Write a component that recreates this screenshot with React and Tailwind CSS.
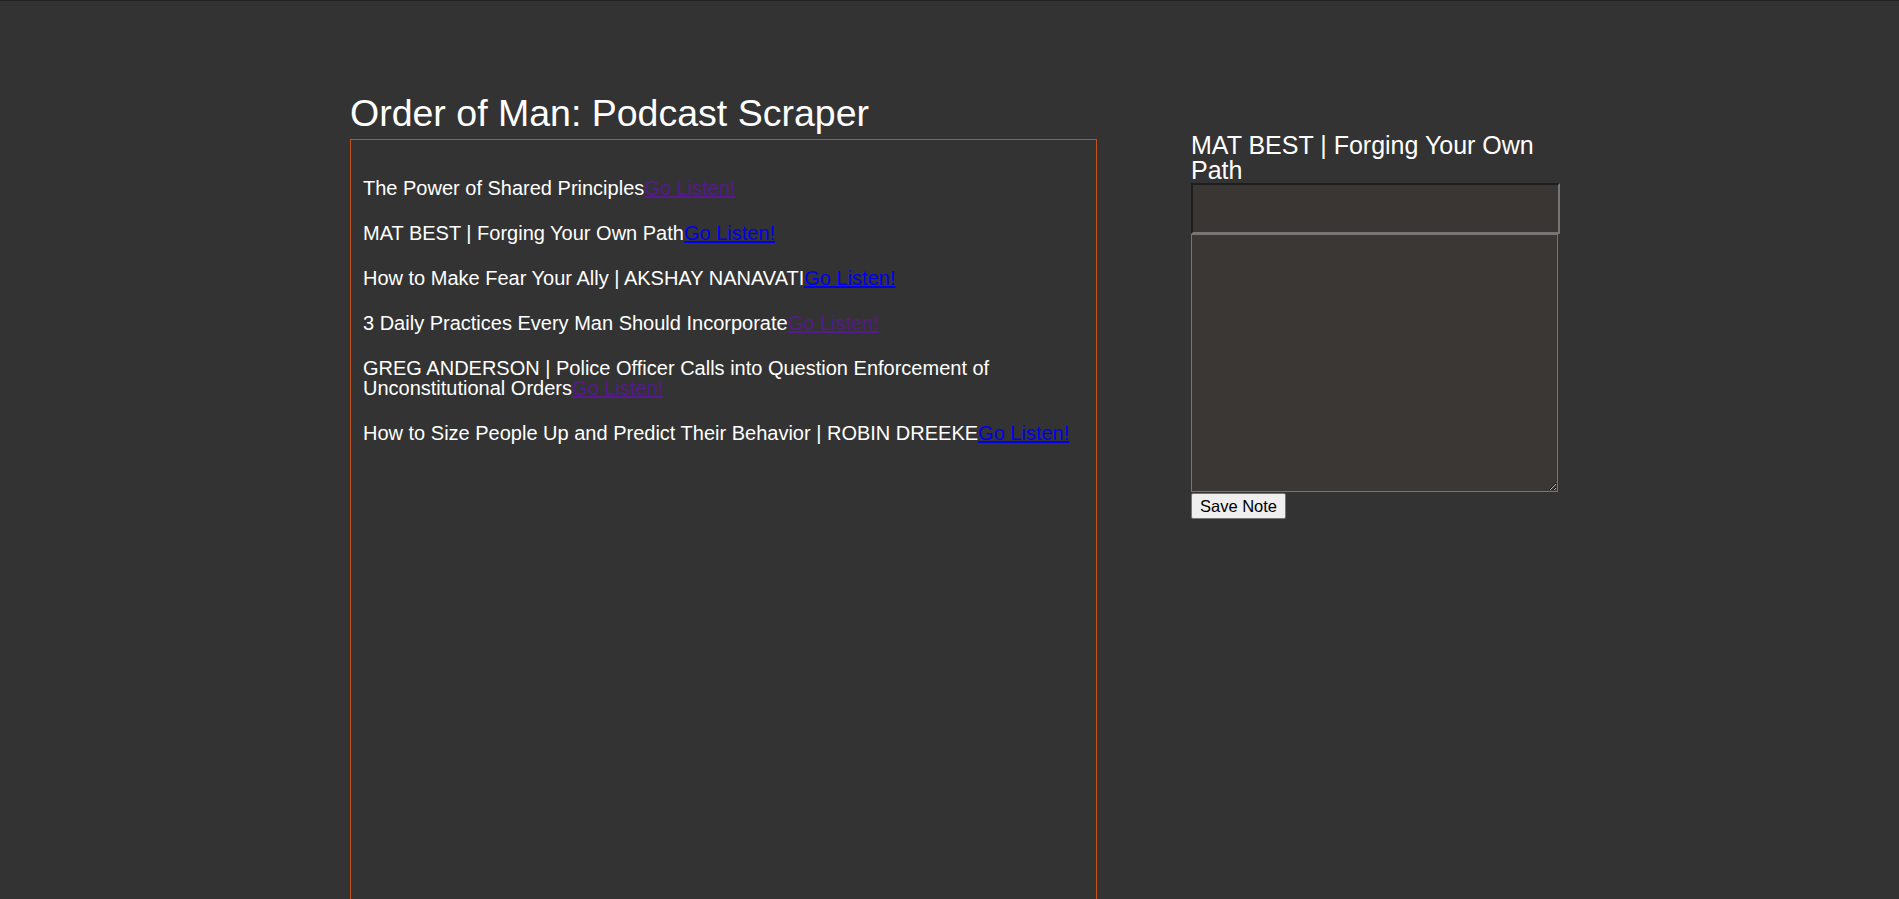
import React from "react";

const items = [
  { title: "The Power of Shared Principles", visited: true },
  { title: "MAT BEST | Forging Your Own Path", visited: false },
  { title: "How to Make Fear Your Ally | AKSHAY NANAVATI", visited: false },
  { title: "3 Daily Practices Every Man Should Incorporate", visited: true },
  {
    title:
      "GREG ANDERSON | Police Officer Calls into Question Enforcement of Unconstitutional Orders",
    visited: true,
  },
  {
    title: "How to Size People Up and Predict Their Behavior | ROBIN DREEKE",
    visited: false,
  },
];

export default function App() {
  return (
    <div
      className="h-[899px] overflow-hidden bg-[#333333] border-t border-[#222222] text-white"
      style={{ fontFamily: '"Liberation Sans", Arial, sans-serif' }}
    >
      <div className="flex pl-[350px]">
        <div className="w-[747px] flex flex-col">
          <h1 className="text-[37.5px] leading-[37px] mt-[94px] mb-[7px] font-normal">
            Order of Man: Podcast Scraper
          </h1>
          <div className="border border-[#c4501c] h-[800px] pl-[12px] pr-[12px] pt-[38px]">
            <div className="flex flex-col gap-[25px]">
              {items.map((it, i) => (
                <div key={i} className="text-[20px] leading-[20px]">
                  {it.title}
                  <a
                    href="#"
                    className={
                      "underline " +
                      (it.visited ? "text-[#551a8b]" : "text-[#0000ee]")
                    }
                  >
                    Go Listen!
                  </a>
                </div>
              ))}
            </div>
          </div>
        </div>
        <div className="ml-[94px] w-[369px] flex flex-col mt-[132px]">
          <h2 className="text-[25px] leading-[25px] font-normal w-[369px]">
            MAT BEST | Forging Your Own Path
          </h2>
          <input
            type="text"
            className="mt-0 h-[51px] w-[369px] bg-[#3a3634] border-2 border-t-[#1e1e1e] border-l-[#1e1e1e] border-r-[#767676] border-b-[#767676] outline-none text-white px-1"
          />
          <textarea className="mt-0 h-[258px] w-[367px] bg-[#3b3735] border border-[#767676] outline-none text-white" />
          <div className="mt-[1px]">
            <button className="h-[26px] px-[8px] bg-[#efefef] border border-[#767676] rounded-[2px] text-black text-[16.5px] leading-[18px]">
              Save Note
            </button>
          </div>
        </div>
      </div>
    </div>
  );
}
